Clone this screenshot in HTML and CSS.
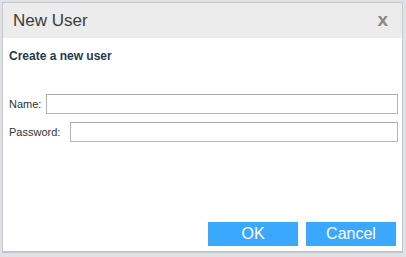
FILE: index.html
```html
<!DOCTYPE html>
<html lang="en">
<head>
    <meta charset="UTF-8">
    <title>New User</title>
    <link rel="stylesheet" href="styles.css">
</head>
<body>
    <div class="dialog">
        <div class="dialog-header">
            <span class="dialog-title">New User</span>
            <span class="dialog-close">x</span>
        </div>
        <div class="dialog-body">
            <h2 class="subtitle">Create a new user</h2>
            <form class="user-form">
                <div class="row row-name">
                    <label for="name">Name:</label>
                    <input type="text" id="name">
                </div>
                <div class="row row-password">
                    <label for="password">Password:</label>
                    <input type="password" id="password">
                </div>
            </form>
        </div>
        <div class="dialog-footer">
            <button class="btn">OK</button>
            <button class="btn">Cancel</button>
        </div>
    </div>
</body>
</html>
```

FILE: styles.css
```css
body {
    margin: 0;
    padding: 2px 3px 4px 2px;
    background-color: #dfe3e8;
    font-family: "Liberation Sans", Arial, sans-serif;
}

.dialog {
    height: 251px;
    box-sizing: border-box;
    background-color: #fff;
    border: 1px solid #c8c8c8;
    border-bottom: 2px solid #c4c4c4;
    display: flex;
    flex-direction: column;
}

.dialog-header {
    height: 35px;
    background-color: #ececec;
    display: flex;
    align-items: center;
    justify-content: space-between;
    padding: 0 14px 0 10px;
}

.dialog-title {
    font-size: 17px;
    color: #3c3c3c;
}

.dialog-close {
    font-size: 19px;
    font-weight: bold;
    color: #8a8a8a;
    margin-top: -2px;
}

.dialog-body {
    flex: 1;
    padding: 11px 4px 0 6px;
}

.subtitle {
    margin: 0;
    font-size: 12px;
    font-weight: bold;
    color: #1e3a52;
}

.user-form {
    margin-top: 31px;
    display: flex;
    flex-direction: column;
    gap: 8px;
}

.row {
    display: flex;
    align-items: center;
}

.row label {
    font-size: 11px;
    color: #333;
}

.row-name label {
    width: 37px;
}

.row-password label {
    width: 61px;
}

.row input {
    flex: 1;
    height: 20px;
    box-sizing: border-box;
    border: 1px solid #b5b5b5;
    border-top-color: #aaa;
    padding: 2px 4px;
}

.dialog-footer {
    display: flex;
    justify-content: flex-end;
    gap: 8px;
    padding: 0 6px 5px 0;
}

.btn {
    width: 90px;
    height: 24px;
    border: none;
    background-color: #3aa8ff;
    color: #fff;
    font-family: "Liberation Sans", Arial, sans-serif;
    font-size: 16px;
    padding: 0;
}
```
